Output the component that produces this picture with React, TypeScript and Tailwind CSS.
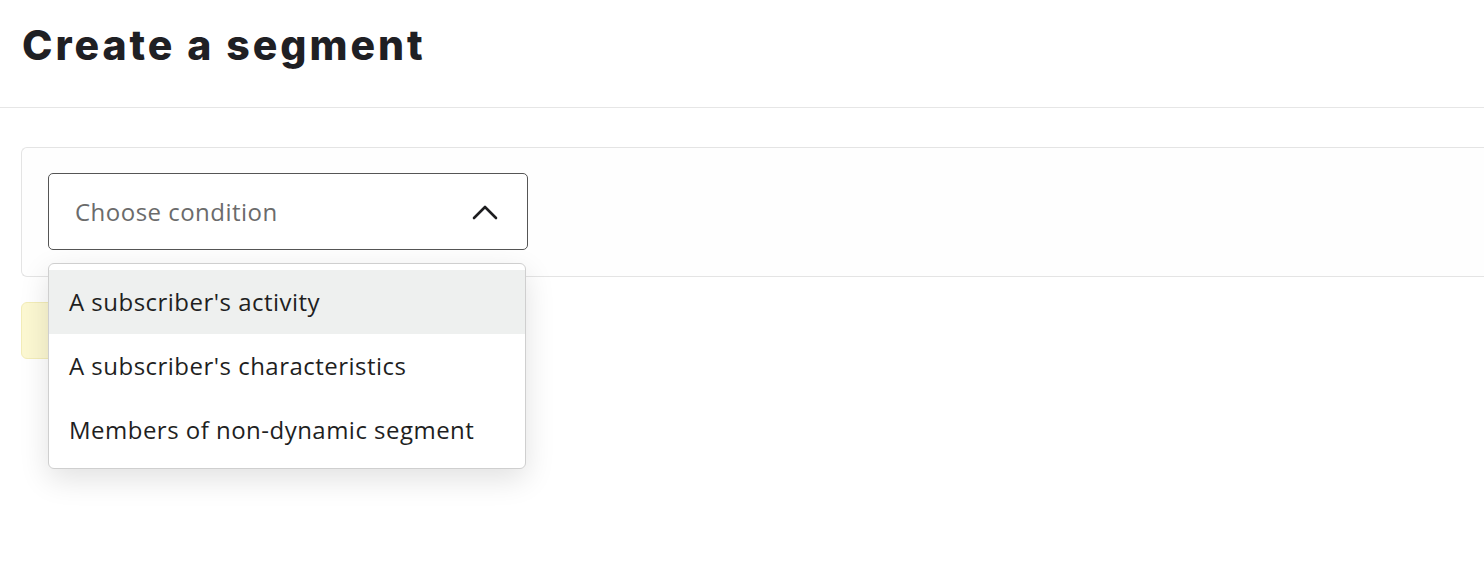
import React from "react";

const options = [
  "A subscriber's activity",
  "A subscriber's characteristics",
  "Members of non-dynamic segment",
];

const ChevronUp = () => (
  <svg width="26" height="16" viewBox="0 0 26 16" fill="none">
    <path
      d="M2 14L13 3L24 14"
      stroke="#1d1d1f"
      strokeWidth="2.6"
      strokeLinecap="round"
      strokeLinejoin="round"
    />
  </svg>
);

const App = () => {
  return (
    <div className="min-h-[570px] w-full overflow-hidden bg-white font-['Open_Sans',sans-serif] text-[#1d1d1f]">
      <div className="border-b border-[#e6e6e6] px-[22px] pt-[20px] pb-[37px]">
        <h1 className="font-['Inter',sans-serif] text-[41px] font-extrabold leading-[50px] tracking-[0.072em] text-[#1f2024]">
          Create a segment
        </h1>
      </div>

      <div className="pl-[21px] pt-[39px]">
        <div className="w-[1500px] rounded-l-md border border-r-0 border-[#e4e4e4] bg-[#fefefe] pl-[26px] pt-[25px] pb-[26px]">
          <div className="relative w-[480px]">
            <div className="flex h-[77px] items-center justify-between rounded-[5px] border border-[#555] bg-white pl-[26px] pr-[29px]">
              <span className="text-[24px] tracking-[0.02em] text-[#6b6b6b]">Choose condition</span>
              <ChevronUp />
            </div>
            <div className="absolute left-0 top-[90px] z-10 w-[478px] rounded-md border border-[#cfcfcf] bg-white py-[6px] shadow-[0_10px_30px_rgba(0,0,0,0.12)]">
              {options.map((o, i) => (
                <div
                  key={o}
                  className={
                    "flex h-[64px] items-center px-[20px] text-[24px] tracking-[0.02em] text-[#1f1f1f] " +
                    (i === 0 ? "bg-[#eef0ef]" : "bg-white")
                  }
                >
                  {o}
                </div>
              ))}
            </div>
          </div>
        </div>

        <div className="mt-[25px] h-[57px] w-[300px] rounded-md border border-[#f3edb8] bg-[#fcf8d2]" />
      </div>
    </div>
  );
};

export default App;
